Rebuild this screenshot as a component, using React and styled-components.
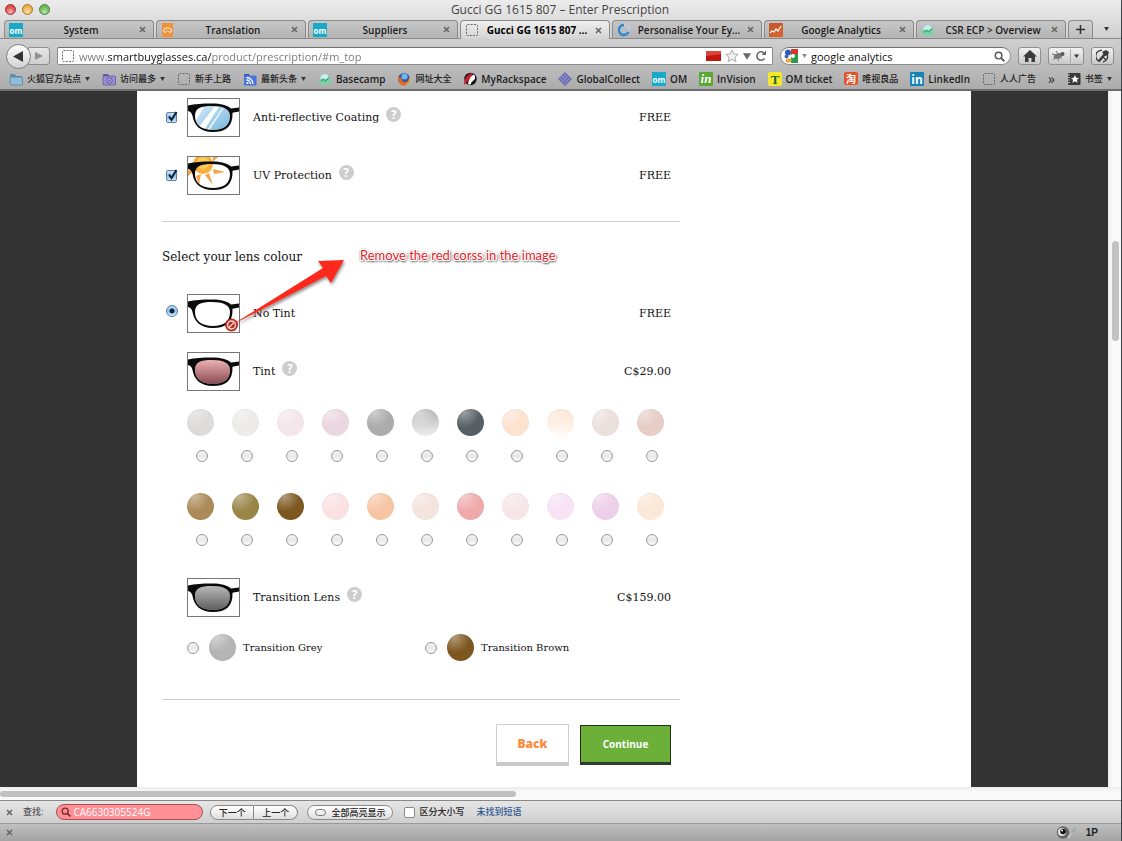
import React from "react";
import styled, { createGlobalStyle, css } from "styled-components";

const UI = `"Open Sans", "Noto Sans CJK SC", sans-serif`;
const SLAB = `"DejaVu Serif", serif`;

const GlobalStyle = createGlobalStyle`
  *, *::before, *::after { box-sizing: border-box; }
  body { margin: 0; background: #ababab; font-family: ${UI}; color: #222; }
  button, input { font-family: inherit; margin: 0; }
  button { padding: 0; cursor: pointer; }
  svg { display: block; flex: none; }
`;

/* ---------- browser window ---------- */

const Window = styled.div`
  display: flex;
  flex-direction: column;
  min-height: 100vh;
  border-right: 1px solid #3c4450;
`;

const Chrome = styled.header`
  background: linear-gradient(#ececec, #cfcfcf 39px, #cfcfcf 40px, #acacac);
  border-bottom: 2px solid #6c6c6c;
`;

const TitleBar = styled.div`
  display: flex;
  align-items: center;
  height: 20px;
  padding: 0 6px 0 5px;
`;

const Lights = styled.div`
  display: flex;
  gap: 6px;
  margin-bottom: 2px;
`;

const Light = styled.button`
  width: 11px;
  height: 11px;
  border: 1px solid ${(p) => p.$edge};
  border-radius: 50%;
  background: radial-gradient(circle at 50% 75%, #fff9, transparent 60%), ${(p) => p.$fill};
`;

const WindowTitle = styled.h1`
  flex: 1;
  margin: 0 45px 0 0;
  text-align: center;
  font-size: 12px;
  line-height: 18px;
  font-weight: 400;
  color: #444;
`;

const TabStrip = styled.div`
  display: flex;
  align-items: stretch;
  gap: 2px;
  height: 19px;
  padding: 0 4px;
  border-bottom: 1px solid #8a8a8a;
`;

const TabBox = styled.div`
  flex: 1 1 0;
  min-width: 0;
  display: flex;
  align-items: center;
  gap: 4px;
  padding: 0 7px 0 4px;
  border: 1px solid #8b8b8b;
  border-bottom: 0;
  border-radius: 4px 4px 0 0;
  background: linear-gradient(#c6c6c6, #b4b4b4);
  ${(p) =>
    p.$active &&
    css`
      background: linear-gradient(#efefef, #d4d4d4);
      margin-bottom: -1px;
    `}
`;

const TabLabel = styled.button`
  flex: 1;
  min-width: 0;
  border: 0;
  background: none;
  font-size: 10px;
  line-height: 16px;
  font-weight: ${(p) => (p.$active ? 700 : 600)};
  color: ${(p) => (p.$active ? "#000" : "#1a1a1a")};
  white-space: nowrap;
`;

const PlainButton = styled.button`
  display: flex;
  align-items: center;
  justify-content: center;
  border: 0;
  background: none;
`;

const NewTab = styled(PlainButton)`
  width: 25px;
  border: 1px solid #8b8b8b;
  border-bottom: 0;
  border-radius: 4px 4px 0 0;
  background: linear-gradient(#d2d2d2, #bdbdbd);
`;

const TabMenu = styled(PlainButton)`
  width: 22px;
`;

const NavBar = styled.div`
  display: flex;
  align-items: center;
  height: 32px;
  padding: 2px 7px 0 6px;
  gap: 7px;
`;

const History = styled.div`
  display: flex;
  align-items: center;
`;

const BackButton = styled(PlainButton)`
  position: relative;
  width: 25px;
  height: 25px;
  border: 1px solid #808080;
  border-radius: 50%;
  background: linear-gradient(#fdfdfd, #d2d2d2);
`;

const ForwardButton = styled(PlainButton)`
  width: 22px;
  height: 18px;
  margin-left: -3px;
  border: 1px solid #8f8f8f;
  border-radius: 0 3px 3px 0;
  background: linear-gradient(#e6e6e6, #cfcfcf);
`;

const Field = styled.div`
  display: flex;
  align-items: center;
  gap: 4px;
  height: 18px;
  padding: 0 5px 0 3px;
  border: 1px solid #8c8c8c;
  border-top-color: #6e6e6e;
  border-radius: ${(p) => (p.$round ? "9px" : "2px")};
  background: #fff;
  flex: ${(p) => (p.$round ? "0 0 231px" : "1 1 0")};
  min-width: 0;
`;

const FieldInput = styled.input`
  flex: 1;
  min-width: 0;
  height: 16px;
  padding: 0;
  border: 0;
  outline: 0;
  background: none;
  font-size: ${(p) => (p.$small ? 10 : 11)}px;
  color: #111;
`;

const AddressInput = styled(FieldInput)`
  color: #777;
  background: linear-gradient(90deg, #777 28px, #111 28px, #111 133px, #777 133px);
  -webkit-background-clip: text;
  background-clip: text;
  -webkit-text-fill-color: transparent;
`;

const ToolButton = styled(PlainButton)`
  width: ${(p) => (p.$wide ? 36 : 23)}px;
  height: 18px;
  border: 1px solid #8f8f8f;
  border-radius: 3px;
  background: linear-gradient(#f2f2f2, #c9c9c9);
`;

const Bookmarks = styled.nav`
  display: flex;
  align-items: center;
  justify-content: space-between;
  height: 18px;
  padding: 0 9px 2px;
`;

const Bookmark = styled.a`
  display: flex;
  align-items: center;
  gap: 4px;
  font-size: ${(p) => (p.$cjk ? 9 : 10)}px;
  line-height: 16px;
  font-weight: ${(p) => (p.$cjk ? 500 : 600)};
  color: #1c1c1c;
  text-decoration: none;
  white-space: nowrap;
`;

const Overflow = styled(PlainButton)`
  font-size: 14px;
  line-height: 16px;
  color: #333;
`;

/* ---------- page ---------- */

const Viewport = styled.div`
  flex: 1;
  display: flex;
`;

const Backdrop = styled.div`
  flex: 1;
  min-width: 0;
  background: #333;
`;

const Sheet = styled.main`
  max-width: 834px;
  height: 100%;
  margin: 0 auto;
  padding: 7px 25px 21px;
  background: #fff;
  font-family: ${SLAB};
  color: #111;
`;

const Form = styled.form`
  max-width: 518px;
`;

const Group = styled.fieldset`
  position: relative;
  margin: 0;
  padding: 0 9px 0 0;
  border: 0;
  min-width: 0;
`;

const Legend = styled.legend`
  float: left;
  width: 100%;
  padding: 26px 0 28px;
  font-size: 12px;
  line-height: 18px;
  & + * { clear: both; }
`;

const Rule = styled.hr`
  margin: ${(p) => (p.$far ? 38 : 26)}px 0 0;
  border: 0;
  border-top: 1px solid #cfcfcf;
`;

const Options = styled.div`
  display: flex;
  flex-direction: column;
  gap: 19px;
`;

const Option = styled.div`
  display: grid;
  grid-template-columns: 25px 53px minmax(0, 1fr) auto;
  align-items: center;
  font-size: 11px;
  line-height: 18px;
`;

const OptionText = styled.div`
  display: flex;
  align-items: center;
  gap: 7px;
  padding-left: 13px;
`;

const Price = styled.span`
  text-align: right;
`;

const Help = styled.button`
  width: 15px;
  height: 15px;
  margin-bottom: 6px;
  border: 0;
  border-radius: 50%;
  background: #cdcdcd;
  color: #fff;
  font: 700 12px/15px "Open Sans", sans-serif;
`;

const Thumb = styled.svg`
  border: 1px solid #777;
  background: #fff;
`;

const Radio = styled.input.attrs({ type: "radio" })`
  appearance: none;
  flex: none;
  width: 12px;
  height: 12px;
  border: 1px solid #999;
  border-radius: 50%;
  background: linear-gradient(#f4f4f4, #e8e8e8 50%, #fdfdfd);
  &:checked {
    border-color: #5b7fa8;
    background: radial-gradient(circle, #10243c 2px, transparent 3px), linear-gradient(#b7d8f4, #8fc2ee 50%, #d7f2ff);
  }
`;

const MainRadio = styled(Radio)`
  margin: 0 0 5px 4px;
`;

const CheckWrap = styled.span`
  display: grid;
  margin-left: 4px;
  & > * { grid-area: 1 / 1; }
  svg { pointer-events: none; margin-top: -2px; }
`;

const CheckBox = styled.input.attrs({ type: "checkbox" })`
  appearance: none;
  width: 11px;
  height: 11px;
  border: 1px solid #8a8a8a;
  border-radius: 2px;
  background: #fff;
  &:checked {
    border-color: #5c7ea8;
    background: linear-gradient(#cfe4f8, #8dbde9 50%, #c8ebff);
  }
`;

const Swatches = styled.div`
  display: grid;
  grid-template-columns: repeat(11, 45px);
  row-gap: 31px;
  padding: 18px 0 32px 25px;
`;

const Swatch = styled.label`
  display: flex;
  flex-direction: column;
  gap: 14px;
  ${Radio} { margin-left: 9px; }
`;

const Ball = styled.span`
  display: block;
  flex: none;
  width: 27px;
  height: 27px;
  border-radius: 50%;
  background: radial-gradient(circle at 28% 12%, #fff6, transparent 50%),
    linear-gradient(${(p) => p.$from}, ${(p) => p.$to || p.$from});
  box-shadow: inset 0 1px 1px #0000000d;
`;

const Transitions = styled.div`
  display: grid;
  grid-template-columns: repeat(2, 238px);
  padding: 17px 0 0 25px;
`;

const Transition = styled.label`
  display: flex;
  align-items: center;
  font-size: 10px;
  line-height: 16px;
  ${Ball} { margin: 0 7px 0 10px; }
`;

const Actions = styled.div`
  display: flex;
  justify-content: flex-end;
  align-items: center;
  gap: 11px;
  padding: 24px 9px 0 0;
  font-family: "Open Sans", sans-serif;
`;

const BackLink = styled.button`
  width: 73px;
  height: 42px;
  border: 1px solid #cfcfcf;
  border-bottom: 4px solid #c9c9c9;
  background: #fff;
  color: #fb8c3c;
  font-size: 12px;
  font-weight: 800;
`;

const ContinueButton = styled.button`
  width: 91px;
  height: 40px;
  border: 1px solid #1f3313;
  border-bottom: 3px solid #333b30;
  background: #6cb03a;
  color: #fff;
  font-size: 10px;
  font-weight: 700;
`;

const Annotation = styled.div`
  position: absolute;
  top: 21px;
  left: 60px;
  width: 350px;
  pointer-events: none;
`;

const Note = styled.p`
  position: absolute;
  top: 3px;
  left: 138px;
  margin: 0;
  font: 400 13px/18px Lato, sans-serif;
  color: #e8202a;
  white-space: nowrap;
  text-shadow: 1px 0 #fff, -1px 0 #fff, 0 1px #fff, 0 -1px #fff, 1px 1px #fff, -1px -1px #fff,
    1px -1px #fff, -1px 1px #fff, 1px 2px 2px #444, -1px 1px 2px #666, 2px 1px 2px #666, 0 -1px 2px #999;
`;

const ScrollY = styled.div`
  width: 13px;
  padding: 150px 2px 0 4px;
  background: linear-gradient(90deg, #ececec, #fafafa 5px);
  &::after {
    content: "";
    display: block;
    height: 100px;
    border-radius: 4px;
    background: #c2c2c2;
  }
`;

const ScrollX = styled.div`
  height: 13px;
  padding-top: 4px;
  background: linear-gradient(#ececec, #fafafa 5px);
  &::after {
    content: "";
    display: block;
    width: 46%;
    height: 6px;
    border-radius: 4px;
    background: #c0c0c0;
  }
`;

/* ---------- bottom bars ---------- */

const FindBar = styled.div`
  display: flex;
  align-items: center;
  height: 23px;
  padding: 0 6px;
  border-top: 1px solid #888;
  background: linear-gradient(#e6e6e6, #cfcfcf);
  font-size: 9px;
  line-height: 14px;
  font-weight: 500;
`;

const FindLabel = styled.label`
  margin: 0 13px 0 10px;
  color: #555;
`;

const FindField = styled(Field)`
  flex: 0 0 147px;
  height: 16px;
  padding: 0 4px;
  gap: 2px;
  border-color: #a05458;
  border-radius: 8px;
  background: #ff9096;
  ${FieldInput} { height: 14px; color: #fff; }
`;

const Pills = styled.div`
  display: flex;
  margin-left: 7px;
  & + & { margin-left: 9px; }
`;

const Pill = styled.button`
  display: flex;
  align-items: center;
  justify-content: center;
  gap: 5px;
  min-width: 44px;
  height: 15px;
  padding: 0 7px;
  border: 1px solid #888;
  background: linear-gradient(#fff, #dedede);
  font-size: 9px;
  font-weight: 500;
  color: #222;
  & + & { border-left: 0; }
  &:first-child { border-radius: 8px 0 0 8px; }
  &:last-child { border-radius: 0 8px 8px 0; }
  &:only-child { border-radius: 8px; }
`;

const PillMark = styled.span`
  width: 11px;
  height: 7px;
  border: 1px solid #777;
  border-radius: 4px;
`;

const MatchCase = styled.label`
  display: flex;
  align-items: center;
  gap: 4px;
  margin: 0 12px 0 11px;
`;

const FindStatus = styled.output`
  color: #2f5590;
`;

const AddonBar = styled.footer`
  display: flex;
  align-items: center;
  gap: 10px;
  height: 18px;
  padding: 0 23px 0 6px;
  border-top: 1px solid #999;
  background: linear-gradient(#c0c0c0, #a3a3a3);
  & > :nth-child(2) { margin-left: auto; }
`;

const OneP = styled(PlainButton)`
  font: 700 10px/14px "Liberation Sans", sans-serif;
  color: #222;
`;

/* ---------- drawings ---------- */

const Cross = () => (
  <svg width="7" height="7" viewBox="0 0 7 7">
    <path d="M1 1l5 5M6 1l-5 5" stroke="#666" strokeWidth="1.6" />
  </svg>
);

const Caret = ({ color = "#333", size = 5 }) => (
  <svg width={size} height={size - 1} viewBox="0 0 6 5">
    <path d="M0 0h6L3 5z" fill={color} />
  </svg>
);

const Magnifier = ({ color = "#555", size = 11 }) => (
  <svg width={size} height={size} viewBox="0 0 12 12" fill="none" stroke={color}>
    <circle cx="5" cy="5" r="3.6" strokeWidth="1.6" />
    <path d="M7.6 7.6l3.6 3.6" strokeWidth="2" />
  </svg>
);

const LENS_SHAPE = "M7 17C7 9 13 7 24 7s18 3 18 10c0 9-6 14-17 14S7 26 7 17z";

const ICONS = {
  om: (
    <>
      <rect width="14" height="14" fill="#18a9c9" />
      <text x="7" y="11" textAnchor="middle" fontFamily="Open Sans" fontWeight="700" fontSize="8" fill="#fff">om</text>
    </>
  ),
  translate: (
    <>
      <rect x="1" width="11" height="14" fill="#f0923a" />
      <path d="M3 9c-1-3 1-4 3.500-4s4.500 1 3.500 4c-1 1-2 0-3.500-1.500C5 9 4 10 3 9z" fill="none" stroke="#fff" />
    </>
  ),
  blank: <rect x="1.500" y="1.500" width="11" height="11" rx="1" fill="none" stroke="#666" strokeDasharray="2 1.200" />,
  spinner: (
    <>
      <circle cx="7" cy="7" r="5" fill="none" stroke="#9fc4e4" strokeWidth="2.200" />
      <path d="M7 2a5 5 0 1 0 4.500 7" fill="none" stroke="#2a86cf" strokeWidth="2.400" />
      <path d="M7 2a5 5 0 0 1 5 5" fill="none" stroke="#c2cdd6" strokeWidth="2.400" />
    </>
  ),
  analytics: (
    <>
      <rect width="14" height="14" rx="1" fill="#d9602c" />
      <path d="M0 14V0h14z" fill="#b9522a" opacity=".5" />
      <path d="M1 10l2-2 2 1 2-3 2 2 3-5" fill="none" stroke="#fff" strokeWidth="1.200" />
    </>
  ),
  basecamp: (
    <>
      <path d="M1 11.500C0 7 4 2 7.500 2c3 0 5.500 5 5.500 9-2 2.500-10 2.500-12 .5z" fill="#7fd2a6" />
      <path d="M2 6.500C4 1 9 .5 11 5.500l-3.500 2z" fill="#c9edf8" />
      <path d="M3 9.500l2.500-2.500 2 2 3.500-3.500" fill="none" stroke="#3dab70" strokeWidth="1.200" />
    </>
  ),
  folder: (
    <>
      <path d="M1 2h5l1 2h6v9H1z" fill="#5f8fae" />
      <rect x="1" y="5" width="12.500" height="8" rx="1" fill="#8fbdd8" stroke="#4e7a96" strokeWidth=".7" />
    </>
  ),
  recent: (
    <>
      <path d="M1 2h5l1 2h6v9H1z" fill="#6a5bb0" />
      <rect x="1" y="4" width="12.500" height="9" rx="1" fill="#9a8fd0" stroke="#5c4fa0" strokeWidth=".7" />
      <circle cx="7.500" cy="8.500" r="2.700" fill="#b9b0e4" stroke="#5c4fa0" />
      <circle cx="7.500" cy="8.500" r="1" fill="#5c4fa0" />
    </>
  ),
  rss: (
    <>
      <path d="M1 2h5l1 2h6v9H1z" fill="#2f55b8" />
      <rect x="1" y="3.500" width="12.500" height="10" rx="1" fill="#4a76dc" />
      <circle cx="4.500" cy="11" r="1.100" fill="#fff" />
      <path d="M3.500 8a4 4 0 0 1 4 4M3.500 5.500A6.500 6.500 0 0 1 10 12" fill="none" stroke="#fff" strokeWidth="1.300" />
    </>
  ),
  firefox: (
    <>
      <circle cx="7" cy="7" r="6" fill="#2b5fae" />
      <circle cx="7.500" cy="4.500" r="3" fill="#6fb5e8" />
      <path d="M1 4c0 7 3 9.500 6 9.500S14 11 13 4c-1 5-3 6-5 6S4 8 5 6C3 6 2 5 1 4z" fill="#e2661b" />
      <path d="M12.500 4c.5 5-2 8-5 8.500 4 .5 7-4 5-8.500z" fill="#f7b733" />
    </>
  ),
  rackspace: (
    <>
      <circle cx="7.500" cy="7" r="6.200" fill="#111" />
      <path d="M1 13C1 6 5 1 10 1c-2 3-2 5-4 7s-3 3-5 5z" fill="#c9202c" />
      <path d="M5 11.500c1-4.500 3-8 6-9 2 3 1 5-.5 6S8 10 8 12c-1 1-2 1-3-.5z" fill="#fff" />
    </>
  ),
  collect: (
    <>
      <path d="M7 0l7 7-7 7-7-7z" fill="#6a6ab4" />
      <path d="M3.500 3.500l7 7M5.300 1.700l7 7M1.700 5.300l7 7M10.500 3.500l-7 7M8.700 1.700l-7 7M12.300 5.300l-7 7" stroke="#a3a3d6" strokeWidth=".6" />
    </>
  ),
  invision: (
    <>
      <rect width="14" height="14" rx="1" fill="#58a633" />
      <text x="7" y="11" textAnchor="middle" fontFamily="Liberation Serif" fontStyle="italic" fontWeight="700" fontSize="13" fill="#fff">in</text>
    </>
  ),
  ticket: (
    <>
      <rect width="14" height="14" rx="2" fill="#f4e92c" />
      <text x="7" y="11.500" textAnchor="middle" fontFamily="Liberation Serif" fontWeight="700" fontSize="13" fill="#23652e">T</text>
    </>
  ),
  tao: (
    <>
      <rect width="14" height="13" rx="2" fill="#e5532d" />
      <text x="7" y="10.500" textAnchor="middle" fontFamily="Noto Sans CJK SC" fontWeight="700" fontSize="10" fill="#fff">淘</text>
    </>
  ),
  linkedin: (
    <>
      <rect width="14" height="14" rx="1" fill="#1583b4" />
      <text x="7" y="11.500" textAnchor="middle" fontFamily="Open Sans" fontWeight="700" fontSize="12" fill="#fff">in</text>
    </>
  ),
  star: (
    <>
      <rect x="1" y="1" width="12.500" height="12" rx="1" fill="#3a3a3a" />
      <path d="M1 3h2M1 5.500h2M1 8h2M1 10.500h2" stroke="#bbb" />
      <path d="M8 3l1.200 2.700 2.900.2-2.200 1.900.7 2.900L8 9.200l-2.600 1.500.7-2.900-2.200-1.900 2.900-.2z" fill="#fff" />
    </>
  ),
};

const Icon = ({ name }) => (
  <svg width="14" height="14" viewBox="0 0 14 14">{ICONS[name]}</svg>
);

const LENSES = {
  clear: <path d={LENS_SHAPE} fill="#fff" />,
  coating: (
    <>
      <path d={LENS_SHAPE} fill="url(#blueLens)" />
      <path d="M10 29L28 6h4L15 33zM18 33L36 7h1L20 33zM6 22l3-12 8-4L9 20z" fill="#fff" />
    </>
  ),
  sun: (
    <>
      <path d="M25 12l12 3-11 2zM21 16l4 12-8-10zM13 17l-2 11-3-9zM6 14l-6 5v-6zM25 5l5-5h-5z" fill="#f5a44a" />
      <circle cx="15" cy="7" r="10" fill="#f9b13c" />
      <circle cx="15" cy="6" r="6" fill="#fbc95c" />
    </>
  ),
  rose: <path d={LENS_SHAPE} fill="url(#roseLens)" />,
  grey: <path d={LENS_SHAPE} fill="url(#greyLens)" />,
};

const Glasses = ({ lens, blocked }) => (
  <Thumb width="53" height="39" viewBox="0 0 51 37" role="img" aria-label={`${lens} lens`}>
    <defs>
      <linearGradient id="blueLens" x1="0" y1="0" x2="1" y2="1">
        <stop offset="0" stopColor="#d5ebf8" />
        <stop offset="1" stopColor="#79b7e0" />
      </linearGradient>
      <linearGradient id="roseLens" x1="0" y1="0" x2="0" y2="1">
        <stop offset="0" stopColor="#efb1b3" />
        <stop offset="1" stopColor="#864a50" />
      </linearGradient>
      <linearGradient id="greyLens" x1="0" y1="0" x2="0" y2="1">
        <stop offset="0" stopColor="#b9b9b9" />
        <stop offset="1" stopColor="#5e5e5e" />
      </linearGradient>
    </defs>
    {LENSES[lens]}
    <path
      fillRule="evenodd"
      fill="#0b0b0b"
      d="M0 6.500C7 5 14 4.500 24 4.500c9 0 15 1.500 19 5l8-1v4l-6.500 1.200C45 27 38 33 25 33 12 33 6 26 4.500 17 4 14 2 12.500 0 12zM7 17c0 9 7 14 18 14s17-5 17-14C42 10 35 7 24 7S7 9 7 17z"
    />
    {blocked && (
      <g transform="translate(43.500 30)">
        <circle r="6.500" fill="#b8291f" />
        <circle r="4" fill="none" stroke="#f3d8d2" strokeWidth="1.500" />
        <path d="M-3 3l6-6" stroke="#f3d8d2" strokeWidth="1.600" />
      </g>
    )}
  </Thumb>
);

/* ---------- data ---------- */

const TABS = [
  ["om", "System"],
  ["translate", "Translation"],
  ["om", "Suppliers"],
  ["blank", "Gucci GG 1615 807 …", true],
  ["spinner", "Personalise Your Ey…"],
  ["analytics", "Google Analytics"],
  ["basecamp", "CSR ECP > Overview"],
];

const BOOKMARKS = [
  ["folder", "火狐官方站点", true, true],
  ["recent", "访问最多", true, true],
  ["blank", "新手上路", true],
  ["rss", "最新头条", true, true],
  ["basecamp", "Basecamp"],
  ["firefox", "网址大全", true],
  ["rackspace", "MyRackspace"],
  ["collect", "GlobalCollect"],
  ["om", "OM"],
  ["invision", "InVision"],
  ["ticket", "OM ticket"],
  ["tao", "唯视良品", true],
  ["linkedin", "LinkedIn"],
  ["blank", "人人广告", true],
];

const TINTS = [
  ["#dddcdb"], ["#ecebea"], ["#f3e6eb"], ["#ebd7df"], ["#acacac"], ["#b4b4b4", "#eeeeee"],
  ["#566064"], ["#fde2d0"], ["#fde3cf", "#fffaf6"], ["#eae0dc"], ["#e6cdc5"],
  ["#ab8a57"], ["#988547"], ["#7d571f"], ["#fbe1e2"], ["#f6c5a4"], ["#f5e3de"],
  ["#eeaaab"], ["#f7e6e9"], ["#f8e2f5"], ["#eecfe9"], ["#fce8d8"],
];

const HelpButton = ({ about }) => (
  <Help type="button" aria-label={`Help: ${about}`}>?</Help>
);

const Coating = ({ id, lens, label }) => (
  <Option>
    <CheckWrap>
      <CheckBox id={id} defaultChecked />
      <svg width="13" height="13" viewBox="0 0 13 13">
        <path d="M3 6.500l2.500 3.500L10.500 2" fill="none" stroke="#111c2c" strokeWidth="2" />
      </svg>
    </CheckWrap>
    <Glasses lens={lens} />
    <OptionText>
      <label htmlFor={id}>{label}</label>
      <HelpButton about={label} />
    </OptionText>
    <Price>FREE</Price>
  </Option>
);

export default function App() {
  return (
    <Window>
      <GlobalStyle />
      <Chrome>
        <TitleBar>
          <Lights>
            <Light aria-label="Close" $fill="#e5484a" $edge="#9a3a3a" />
            <Light aria-label="Minimise" $fill="#efb145" $edge="#a5752c" />
            <Light aria-label="Zoom" $fill="#6cba55" $edge="#4c8340" />
          </Lights>
          <WindowTitle>Gucci GG 1615 807 – Enter Prescription</WindowTitle>
        </TitleBar>
        <TabStrip role="tablist">
          {TABS.map(([icon, label, active], i) => (
            <TabBox key={i} $active={active}>
              <Icon name={icon} />
              <TabLabel role="tab" aria-selected={!!active} $active={active}>{label}</TabLabel>
              <PlainButton aria-label={`Close ${label}`}><Cross /></PlainButton>
            </TabBox>
          ))}
          <NewTab aria-label="New tab">
            <svg width="9" height="9" viewBox="0 0 9 9"><path d="M4.500 0v9M0 4.500h9" stroke="#333" strokeWidth="1.600" /></svg>
          </NewTab>
          <TabMenu aria-label="List tabs"><Caret /></TabMenu>
        </TabStrip>
        <NavBar>
          <History>
            <BackButton aria-label="Back">
              <svg width="11" height="11" viewBox="0 0 11 11"><path d="M0 5.500L10 0v11z" fill="#333" /></svg>
            </BackButton>
            <ForwardButton aria-label="Forward">
              <svg width="8" height="8" viewBox="0 0 8 8"><path d="M8 4L0 0v8z" fill="#909090" /></svg>
            </ForwardButton>
          </History>
          <Field>
            <Icon name="blank" />
            <AddressInput aria-label="Address" defaultValue="www.smartbuyglasses.ca/product/prescription/#m_top" />
            <svg width="15" height="10" viewBox="0 0 15 10"><rect width="15" height="10" fill="#c4150f" /><path d="M0 0h15v3L0 5z" fill="#d9463c" /></svg>
            <svg width="14" height="14" viewBox="0 0 14 14"><path d="M7 1l1.900 4 4.300.4-3.300 2.900 1 4.300L7 10.300l-3.900 2.300 1-4.300L.8 5.400 5.100 5z" fill="#f3f3f3" stroke="#aaa" /></svg>
            <Caret color="#666" size={8} />
            <PlainButton aria-label="Reload">
              <svg width="12" height="12" viewBox="0 0 12 12"><path d="M9.500 8.500A4.200 4.200 0 1 1 9 3" fill="none" stroke="#666" strokeWidth="1.500" /><path d="M11 .5V5H6.500z" fill="#666" /></svg>
            </PlainButton>
          </Field>
          <Field $round>
            <svg width="14" height="14" viewBox="0 0 14 14">
              <rect x="7" y="0" width="7" height="5" fill="#dd3329" />
              <rect x="7" y="5" width="7" height="9" fill="#2c9a4b" />
              <rect x="0" y="4" width="7" height="6" fill="#e7eef9" />
              <circle cx="4" cy="3.500" r="3" fill="#2c5bb8" />
              <circle cx="9" cy="7" r="2" fill="#fff" />
              <circle cx="2.500" cy="7.500" r="1.800" fill="#2c5bb8" />
              <ellipse cx="4.500" cy="11.500" rx="3" ry="2" fill="#eda63a" />
            </svg>
            <Caret color="#888" />
            <FieldInput aria-label="Search" defaultValue="google analytics" />
            <PlainButton aria-label="Go"><Magnifier /></PlainButton>
          </Field>
          <ToolButton aria-label="Home">
            <svg width="14" height="12" viewBox="0 0 14 12"><path d="M7 0l7 6.500h-2V12H8.500V8h-3v4H2V6.500H0z" fill="#3c3c3c" /></svg>
          </ToolButton>
          <ToolButton $wide aria-label="Firebug">
            <svg width="32" height="14" viewBox="0 0 32 14">
              <ellipse cx="8" cy="7" rx="4.500" ry="2.600" transform="rotate(-18 8 7)" fill="#777" />
              <circle cx="12.500" cy="5" r="2" fill="#555" />
              <path d="M2 5l4 1M3 11l3-3M8 12l1-3M6 2l2 3M12 10l-2-2" stroke="#777" />
              <path d="M20.500 0v14" stroke="#aaa" />
              <path d="M24 5.500h5L26.500 9z" fill="#333" />
            </svg>
          </ToolButton>
          <ToolButton aria-label="Developer tools">
            <svg width="14" height="14" viewBox="0 0 14 14" fill="none" stroke="#3a3a3a">
              <path d="M4 12.500A5.600 5.600 0 0 1 6 1.500M11 5a5.600 5.600 0 0 1-4 8" strokeWidth="1.300" />
              <path d="M3 12l6-7" strokeWidth="2.400" />
              <path d="M6 3l4-2 3 2-1 3-3 1z" fill="#3a3a3a" stroke="none" />
              <path d="M7 8l3 3" strokeWidth="1.300" />
            </svg>
          </ToolButton>
        </NavBar>
        <Bookmarks aria-label="Bookmarks">
          {BOOKMARKS.map(([icon, label, cjk, menu]) => (
            <Bookmark key={label} href="#" $cjk={cjk}>
              <Icon name={icon} />
              {label}
              {menu && <Caret />}
            </Bookmark>
          ))}
          <Overflow aria-label="More bookmarks">»</Overflow>
          <Bookmark href="#" $cjk>
            <Icon name="star" />
            书签
            <Caret />
          </Bookmark>
        </Bookmarks>
      </Chrome>

      <Viewport>
        <Backdrop>
          <Sheet>
            <Form onSubmit={(e) => e.preventDefault()}>
              <Group aria-label="Coatings">
                <Options>
                  <Coating id="anti-reflective" lens="coating" label="Anti-reflective Coating" />
                  <Coating id="uv" lens="sun" label="UV Protection" />
                </Options>
              </Group>
              <Rule />
              <Group>
                <Legend>Select your lens colour</Legend>
                <Options>
                  <Option>
                    <MainRadio id="no-tint" name="tint" defaultChecked />
                    <Glasses lens="clear" blocked />
                    <OptionText><label htmlFor="no-tint">No Tint</label></OptionText>
                    <Price>FREE</Price>
                  </Option>
                  <Option>
                    <span />
                    <Glasses lens="rose" />
                    <OptionText>Tint<HelpButton about="Tint" /></OptionText>
                    <Price>C$29.00</Price>
                  </Option>
                </Options>
                <Swatches>
                  {TINTS.map(([from, to], i) => (
                    <Swatch key={i}>
                      <Ball $from={from} $to={to} />
                      <Radio name="tint" aria-label={`Tint ${i + 1}`} />
                    </Swatch>
                  ))}
                </Swatches>
                <Option>
                  <span />
                  <Glasses lens="grey" />
                  <OptionText>Transition Lens<HelpButton about="Transition Lens" /></OptionText>
                  <Price>C$159.00</Price>
                </Option>
                <Transitions>
                  <Transition><Radio name="tint" /><Ball $from="#b4b4b4" />Transition Grey</Transition>
                  <Transition><Radio name="tint" /><Ball $from="#7d571f" />Transition Brown</Transition>
                </Transitions>
                <Annotation>
                  <svg width="130" height="90" viewBox="0 0 130 90">
                    <defs>
                      <filter id="drop" x="-10%" y="-10%" width="130%" height="130%">
                        <feDropShadow dx="1" dy="2" stdDeviation="1.500" floodOpacity=".45" />
                      </filter>
                    </defs>
                    <path d="M8 83L101 25 96 18 122 17 109 40 104 33z" fill="#fb2a1e" filter="url(#drop)" />
                  </svg>
                  <Note>Remove the red corss in the image</Note>
                </Annotation>
              </Group>
              <Rule $far />
              <Actions>
                <BackLink type="button">Back</BackLink>
                <ContinueButton type="submit">Continue</ContinueButton>
              </Actions>
            </Form>
          </Sheet>
        </Backdrop>
        <ScrollY />
      </Viewport>
      <ScrollX />

      <FindBar>
        <PlainButton aria-label="Close find bar"><Cross /></PlainButton>
        <FindLabel htmlFor="find">查找:</FindLabel>
        <FindField>
          <Magnifier color="#7a2c30" size={10} />
          <FieldInput id="find" $small defaultValue="CA6630305524G" />
        </FindField>
        <Pills>
          <Pill>下一个</Pill>
          <Pill>上一个</Pill>
        </Pills>
        <Pills>
          <Pill><PillMark />全部高亮显示</Pill>
        </Pills>
        <MatchCase><CheckBox />区分大小写</MatchCase>
        <FindStatus>未找到短语</FindStatus>
      </FindBar>
      <AddonBar>
        <PlainButton aria-label="Close add-on bar"><Cross /></PlainButton>
        <PlainButton aria-label="Firebug status">
          <svg width="20" height="14" viewBox="0 0 20 14">
            <circle cx="7" cy="6.500" r="6.200" fill="#666" />
            <circle cx="6" cy="6" r="4" fill="#e4e4e4" />
            <circle cx="7" cy="5.500" r="2.800" fill="#111" />
            <circle cx="6" cy="4.500" r="1" fill="#fff" />
            <path d="M10 13L19 2l-5 10z" fill="#ddd" stroke="#888" strokeWidth=".6" />
          </svg>
        </PlainButton>
        <OneP>1P</OneP>
      </AddonBar>
    </Window>
  );
}
